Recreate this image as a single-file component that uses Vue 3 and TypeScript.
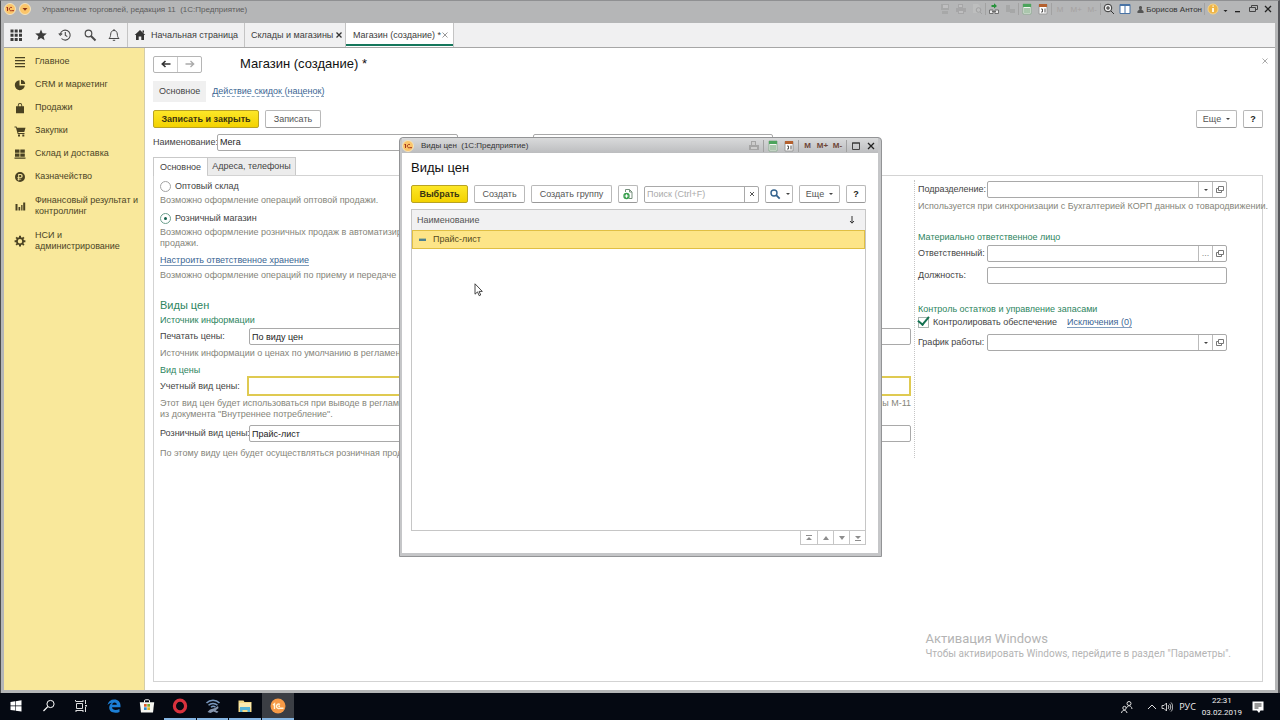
<script setup lang="ts">
import { ref } from 'vue'

interface Section { title: string; icon: string; even?: boolean }

const sections: Section[] = [
  { title: 'Главное', icon: 'M1 1h10v1.3H1zM1 4h10v1.3H1zM1 7h10v1.3H1zM1 10h10v1.3H1z' },
  { title: 'CRM и маркетинг', icon: 'M5.5 1.2v5.3h5.3A5 5 0 1 1 5.500 1.200zM7 .8a4.600 4.600 0 0 1 4.200 4.200H7zM7.500 7h3.300l-1.200 2.600z' },
  { title: 'Продажи', icon: 'M2 4.300h1.800V3.200a2.200 2.200 0 0 1 4.400 0v1.100H10V11.300H2zM4.700 4.300h2.600V3.200a1.300 1.300 0 0 0-2.600 0z', even: true },
  { title: 'Закупки', icon: 'M.5 1.500h2l.5 1.300h8.500L10.300 7H4.200l.3 1h6v1H3.700L1.900 2.500H.5zM4 9.500h2v2H4zM8.300 9.500h2v2h-2z' },
  { title: 'Склад и доставка', icon: 'M1 1.500h4.500v3.300H1zM6.300 1.500h4.500v3.300H6.300zM1 5.500h4.500v3.300H1zM6.300 5.500h4.500v3.300H6.300zM.5 9.600h11v1.200H.5z' },
  { title: 'Казначейство', icon: 'M6 1a5 5 0 1 1 0 10A5 5 0 0 1 6 1zM4.200 3v3.200h-.8v.8h.8v.7h-.8v.7h.8v1h1v-1h2v-.7h-2V7h1.500a2 2 0 0 0 0-4zM5.200 3.900h1.400a1.200 1.200 0 0 1 0 2.300H5.200z', even: true },
  { title: 'Финансовый результат и контроллинг', icon: 'M1.500 4h2v6.500h-2zM4.500 7h1.700v3.500H4.500zM7.200 5h1.300v5.500H7.200zM9.200 2.500h2v8h-2z' },
  { title: 'НСИ и администрирование', icon: 'M5 .8h2v1.500l1.100.5 1.100-1.100 1.300 1.300-1.100 1.100.5 1.100h1.500v2H9.900l-.5 1.100 1.100 1.100-1.300 1.300-1.100-1.100-1.100.5v1.500H5V10l-1.100-.5-1.100 1.100-1.300-1.300 1.100-1.100L2.100 7.200H.6v-2h1.500l.5-1.100L1.500 3l1.300-1.300 1.100 1.100L5 2.300zM6 4a2.200 2.200 0 1 0 0 4.400A2.200 2.200 0 0 0 6 4z', even: true }
]

const kind = ref('retail')
const name = ref('Мега')
const printPrices = ref('По виду цен')
const accountPrice = ref('')
const retailPrice = ref('Прайс-лист')
const department = ref('')
const responsible = ref('')
const position = ref('')
const schedule = ref('')
const controlSupply = ref(true)
const search = ref('')
const prices = ['Прайс-лист']
const pagers = [
  { label: 'В начало', d: 'M2 2h6v1H2zM5 4l3 3H2z' },
  { label: 'Вверх', d: 'M5 3l3 4H2z' },
  { label: 'Вниз', d: 'M5 7L2 3h6z' },
  { label: 'В конец', d: 'M5 6L2 3h6zM2 7h6v1H2z' }
]
</script>

<template>
  <div class="desktop">
    <div class="app-window">
      <header class="titlebar">
        <svg class="coin" viewBox="0 0 12 12"><circle cx="6" cy="6" r="5.500" fill="#fbc56a" stroke="#f2e3c0" /><path d="M2.500 5l1-1v4M8 4.700A1.700 1.700 0 1 0 7.500 7.700H10" fill="none" stroke="#a3321c" /></svg>
        <svg class="coin" viewBox="0 0 12 12"><circle cx="6" cy="6" r="5.500" fill="#fbc56a" stroke="#f2e3c0" /><path d="M3.500 5h5L6 7.800z" fill="#8a3414" /></svg>
        <span class="app-title">Управление торговлей, редакция 11&nbsp; (1С:Предприятие)</span>
        <div class="sys-tools">
          <svg class="ico faint" viewBox="0 0 12 12"><path d="M2 1h8v6H2zM3 8h6v3H3z" fill="#9b9b9b" /><path d="M4 2h5v3H4z" fill="#c9c9c9" /></svg>
          <svg class="ico faint" viewBox="0 0 12 12"><path d="M3 1h5v4H3zM1 5h10v4H1zM3 8h6v3H3z" fill="#989898" /><path d="M4 2h3v2H4zM4 8h4v2H4z" fill="#c9c9c9" /></svg>
          <svg class="ico faint" viewBox="0 0 12 12"><path d="M2 1h5l2 2v7H2z" fill="#c6c6c6" /><circle cx="7.500" cy="7" r="2.300" fill="none" stroke="#8d8d8d" /><path d="M9 9l2 2" stroke="#8d8d8d" /></svg>
          <i class="sep"></i>
          <svg class="ico" viewBox="0 0 12 12"><path d="M3.500 2H6V.3L9 2.900 6 5.500V4H3.500z" fill="#27923b" /><path d="M1.500 7h3.500v3.500H1.500zM7 7h3.500v3.500H7zM4 8.500h4" fill="#ededed" stroke="#666" stroke-width=".9" /></svg>
          <svg class="ico faint" viewBox="0 0 12 12"><path d="M2 2h4v7H2zM6 6h5v4H6z" fill="#999" /></svg>
          <i class="sep"></i>
          <svg class="ico" viewBox="0 0 12 12"><path d="M2 1h8v10H2z" fill="#f5f7f3" stroke="#8fae93" /><path d="M2 1h8v3H2z" fill="#4ca45c" /><path d="M4 5v5M6 5v5M8 5v5" stroke="#619667" /></svg>
          <svg class="ico" viewBox="0 0 12 12"><path d="M2 1.500h8V11H2z" fill="#fff" stroke="#999" /><path d="M2 1h8v3H2z" fill="#b4602e" /><path d="M4 6h1.500v3H4M8 5.500V9.500" fill="none" stroke="#555" /></svg>
          <i class="sep"></i>
          <span class="mem off">M</span><span class="mem off">M+</span><span class="mem off">M-</span>
          <i class="sep"></i>
          <svg class="ico" viewBox="0 0 12 12"><circle cx="5" cy="5" r="3.800" fill="#eee" stroke="#333" /><path d="M3 5h4M5 3v4M8 8l3 3" stroke="#333" /></svg>
          <svg class="ico" viewBox="0 0 12 12"><path d="M1 1.500h10v9H1z" fill="#fff" stroke="#4973a5" /><path d="M1 1h10v2H1zM5.500 2h1v8h-1z" fill="#4973a5" /></svg>
          <span class="user"><svg viewBox="0 0 8 8"><path d="M4 0a2 2 0 0 1 1 3.600L7.500 6v2h-7V6L3 3.600A2 2 0 0 1 4 0z" fill="#555" /></svg>Борисов Антон</span>
          <i class="sep"></i>
          <svg class="ico" viewBox="0 0 12 12"><circle cx="6" cy="6" r="5" fill="#eeb548" stroke="#f4d48c" /><path d="M5.400 2.500h1.500v1.300H5.400zM5 5h2v4H5z" fill="#fff8df" /></svg>
          <svg class="drop" viewBox="0 0 6 12"><path d="M1 7h4L3 9z" fill="#222" /></svg>
          <button class="win-btn" aria-label="Свернуть"><svg viewBox="0 0 10 10"><path d="M2 7h5v1.300H2z" fill="#222" /></svg></button>
          <button class="win-btn" aria-label="Восстановить"><svg viewBox="0 0 10 10"><path d="M3.500 3.500v-2h6v4h-2M1.500 3.500h6v4h-6z" fill="none" stroke="#444" /></svg></button>
          <button class="win-btn" aria-label="Закрыть"><svg viewBox="0 0 10 10"><path d="M2 2l6 6M8 2L2 8" stroke="#222" stroke-width="1.300" /></svg></button>
        </div>
      </header>

      <nav class="tabbar">
        <div class="quick">
          <button aria-label="Меню"><svg viewBox="0 0 14 14"><path d="M1.500 1.500h3v3h-3zM5.700 1.500h3v3h-3zM10 1.500h3v3h-3zM1.500 5.700h3v3h-3zM5.700 5.700h3v3h-3zM10 5.700h3v3h-3zM1.500 10h3v3h-3zM5.700 10h3v3h-3zM10 10h3v3h-3z" fill="#3b3b3b" /></svg></button>
          <button aria-label="Избранное"><svg viewBox="0 0 14 14"><path d="M7 1.500l1.600 3.800 4.200.3-3.200 2.700 1 4L7 10.100l-3.600 2.200 1-4L1.200 5.600l4.200-.3z" fill="#3b3b3b" /></svg></button>
          <button aria-label="История"><svg viewBox="0 0 14 14"><path d="M2.300 6A5 5 0 1 1 3.500 10.500M.8 5.300l1.500 2 1.900-1.800M7.300 4v3.300l2 1.300" fill="none" stroke="#4a4a4a" stroke-width="1.100" /></svg></button>
          <button aria-label="Поиск"><svg viewBox="0 0 14 14"><circle cx="5.500" cy="5.500" r="3.300" fill="none" stroke="#4a4a4a" stroke-width="1.200" /><path d="M8 8l4.500 4.500" stroke="#4a4a4a" stroke-width="2" /></svg></button>
          <button aria-label="Уведомления"><svg viewBox="0 0 14 14"><path d="M2 10.500c1.500-1.500 1.500-2.500 1.700-4.500C4 3.700 5 2.500 7 2.500S10 3.700 10.300 6c.2 2 .2 3 1.700 4.500zM5.800 12.300h2.400M7 1v1.500" fill="none" stroke="#4a4a4a" /></svg></button>
        </div>
        <a class="tab home" href="#home"><svg viewBox="0 0 12 12"><path d="M6 1l5.300 5H10v5H7.300V7.500H4.700V11H2V6H.7zM8.500 1.500H10v2.500l-1.500-1z" fill="#333" /></svg>Начальная страница</a>
        <a class="tab stores" href="#stores">Склады и магазины<svg class="x" viewBox="0 0 8 8"><path d="M1.500 1.500l5 5M6.500 1.500l-5 5" stroke="#333" stroke-width="1.300" /></svg></a>
        <a class="tab active" href="#store">Магазин (создание) *<svg class="x" viewBox="0 0 8 8"><path d="M1.500 1.500l5 5M6.500 1.500l-5 5" stroke="#999" /></svg></a>
      </nav>

      <div class="body">
        <aside class="sidebar">
          <a v-for="s in sections" :key="s.title" class="section" href="#section">
            <svg viewBox="0 0 12 12"><path :d="s.icon" :fill-rule="s.even ? 'evenodd' : 'nonzero'" fill="#4a4222" /></svg>
            <span>{{ s.title }}</span>
          </a>
        </aside>

        <main class="page">
          <div class="head">
            <div class="history">
              <button aria-label="Назад"><svg viewBox="0 0 12 10"><path d="M10.500 5H2.500M5.500 2L2.300 5l3.200 3" fill="none" stroke="#333" stroke-width="1.600" /></svg></button>
              <button aria-label="Вперед"><svg viewBox="0 0 12 10"><path d="M1.500 5h8M6.500 2l3.200 3-3.200 3" fill="none" stroke="#aaa" stroke-width="1.300" /></svg></button>
            </div>
            <h1>Магазин (создание) *</h1>
            <button class="page-close" aria-label="Закрыть форму"><svg viewBox="0 0 8 8"><path d="M1.500 1.500l5 5M6.500 1.500l-5 5" stroke="#aaa" /></svg></button>
          </div>
          <div class="subnav">
            <span class="current">Основное</span>
            <a href="#discounts">Действие скидок (наценок)</a>
          </div>
          <div class="commands">
            <button class="btn primary save">Записать и закрыть</button>
            <button class="btn write">Записать</button>
            <span class="grow"></span>
            <button class="btn more">Еще <i class="caret"></i></button>
            <button class="btn help-btn">?</button>
          </div>
          <div class="name-row">
            <label for="name">Наименование:</label>
            <input id="name" v-model="name" class="name-input">
            <input class="group-input" aria-label="Группа">
          </div>
          <div class="page-tabs">
            <button class="page-tab on">Основное</button>
            <button class="page-tab">Адреса, телефоны</button>
          </div>
          <div class="panel">
            <section class="left">
              <label class="radio first"><input v-model="kind" type="radio" value="wholesale">Оптовый склад</label>
              <p class="hint">Возможно оформление операций оптовой продажи.</p>
              <label class="radio"><input v-model="kind" type="radio" value="retail">Розничный магазин</label>
              <p class="hint">Возможно оформление розничных продаж в автоматизированной<br>продажи.</p>
              <p class="link-line"><a href="#storage">Настроить ответственное хранение</a></p>
              <p class="hint after-link">Возможно оформление операций по приему и передаче на хранение.</p>
              <h2>Виды цен</h2>
              <h3 class="tight">Источник информации</h3>
              <div class="field"><label for="print">Печатать цены:</label><input id="print" v-model="printPrices"></div>
              <p class="hint after-field">Источник информации о ценах по умолчанию в регламентированных формах.</p>
              <h3 class="kind-head">Вид цены</h3>
              <div class="field focused"><label for="account">Учетный вид цены:</label><input id="account" v-model="accountPrice"></div>
              <div class="hint split"><span>Этот вид цен будет использоваться при выводе в регламентированные<br>из документа "Внутреннее потребление".</span><span>формы М-11</span></div>
              <div class="field retail"><label for="retail">Розничный вид цены:</label><input id="retail" v-model="retailPrice"></div>
              <p class="hint last">По этому виду цен будет осуществляться розничная продажа.</p>
            </section>
            <section class="right">
              <div class="rfield dep">
                <label for="dep">Подразделение:</label>
                <div class="combo"><input id="dep" v-model="department"><button aria-label="Выбрать подразделение"><i class="caret"></i></button><button aria-label="Открыть подразделение"><svg viewBox="0 0 10 10"><path d="M3.500 1.500h5v4h-5zM3.500 3.500h-2v4h5v-2" fill="none" stroke="#777" /></svg></button></div>
              </div>
              <p class="hint after-field">Используется при синхронизации с Бухгалтерией КОРП данных о товародвижении.</p>
              <h3 class="spaced">Материально ответственное лицо</h3>
              <div class="rfield resp">
                <label for="resp">Ответственный:</label>
                <div class="combo"><input id="resp" v-model="responsible"><button class="dots" aria-label="Выбрать ответственного">...</button><button aria-label="Открыть ответственного"><svg viewBox="0 0 10 10"><path d="M3.500 1.500h5v4h-5zM3.500 3.500h-2v4h5v-2" fill="none" stroke="#777" /></svg></button></div>
              </div>
              <div class="rfield pos">
                <label for="pos">Должность:</label>
                <div class="combo"><input id="pos" v-model="position"></div>
              </div>
              <h3 class="spaced">Контроль остатков и управление запасами</h3>
              <div class="check-row">
                <label><input v-model="controlSupply" type="checkbox">Контролировать обеспечение</label>
                <a href="#exceptions">Исключения (0)</a>
              </div>
              <div class="rfield dep">
                <label for="sched">График работы:</label>
                <div class="combo"><input id="sched" v-model="schedule"><button aria-label="Выбрать график"><i class="caret"></i></button><button aria-label="Открыть график"><svg viewBox="0 0 10 10"><path d="M3.500 1.500h5v4h-5zM3.500 3.500h-2v4h5v-2" fill="none" stroke="#777" /></svg></button></div>
              </div>
            </section>
          </div>
        </main>
      </div>
    </div>

    <div class="dialog" role="dialog" aria-labelledby="dlg-title">
      <div class="dlg-bar">
        <svg class="coin" viewBox="0 0 12 12"><circle cx="6" cy="6" r="5.500" fill="#fbc56a" stroke="#f2e3c0" /><path d="M2.500 5l1-1v4M8 4.700A1.700 1.700 0 1 0 7.500 7.700H10" fill="none" stroke="#a3321c" /></svg>
        <span class="dlg-caption">Виды цен&nbsp; (1С:Предприятие)</span>
        <svg class="ico" viewBox="0 0 12 12"><path d="M3 1h5v4H3zM1 5h10v5H1z" fill="#a5a5a5" /><path d="M4 2h3v3H4zM3 7h6v2H3z" fill="#ccc" /></svg>
        <i class="sep"></i>
        <svg class="ico" viewBox="0 0 12 12"><path d="M2 1h8v10H2z" fill="#f5f7f3" stroke="#8fae93" /><path d="M2 1h8v3H2z" fill="#4ca45c" /><path d="M4 5v5M6 5v5M8 5v5" stroke="#619667" /></svg>
        <svg class="ico" viewBox="0 0 12 12"><path d="M2 1.500h8V11H2z" fill="#fff" stroke="#999" /><path d="M2 1h8v3H2z" fill="#b4602e" /><path d="M4 6h1.500v3H4M8 5.500V9.500" fill="none" stroke="#555" /></svg>
        <i class="sep"></i>
        <span class="mem">M</span><span class="mem">M+</span><span class="mem">M-</span>
        <i class="sep"></i>
        <button class="win-btn" aria-label="Развернуть"><svg viewBox="0 0 10 10"><path d="M1.500 2h7v6.500h-7z" fill="none" stroke="#444" /><path d="M1 1.500h8v1H1z" fill="#333" /></svg></button>
        <button class="win-btn" aria-label="Закрыть окно"><svg viewBox="0 0 10 10"><path d="M2 2l6 6M8 2L2 8" stroke="#222" stroke-width="1.300" /></svg></button>
      </div>
      <div class="dlg-body">
        <h2 id="dlg-title" class="dlg-title">Виды цен</h2>
        <div class="dlg-tools">
          <button class="btn primary pick">Выбрать</button>
          <button class="btn create">Создать</button>
          <button class="btn create-group">Создать группу</button>
          <button class="btn icon-btn" aria-label="Создать копированием"><svg viewBox="0 0 12 12"><path d="M3.500 4V1.500h4l2.500 2.500v6.500H7M7.500 1.500V4H10" fill="none" stroke="#76907c" /><circle cx="4.500" cy="8" r="3.200" fill="#3aa04e" /><path d="M4.500 6.200v3.600M2.700 8h3.600" stroke="#fff" stroke-width="1.200" /></svg></button>
          <div class="search"><input v-model="search" placeholder="Поиск (Ctrl+F)" aria-label="Поиск"><button aria-label="Очистить"><svg viewBox="0 0 8 8"><path d="M2 2l4 4M6 2L2 6" stroke="#555" /></svg></button></div>
          <button class="btn find" aria-label="Найти"><svg viewBox="0 0 12 12"><circle cx="5" cy="5" r="3" fill="none" stroke="#33628d" stroke-width="1.400" /><path d="M7.200 7.200l3.500 3.500" stroke="#33628d" stroke-width="1.800" /></svg><i class="caret"></i></button>
          <button class="btn more">Еще <i class="caret"></i></button>
          <button class="btn help-btn">?</button>
        </div>
        <div class="grid">
          <table>
            <thead><tr><th><div class="th">Наименование<svg viewBox="0 0 8 10"><path d="M4 1v7M2 6l2 2.200L6 6" fill="none" stroke="#333" /></svg></div></th></tr></thead>
            <tbody><tr v-for="p in prices" :key="p"><td><div class="td"><i class="dash"></i>{{ p }}</div></td></tr></tbody>
          </table>
        </div>
        <div class="pager">
          <button v-for="p in pagers" :key="p.label" :aria-label="p.label"><svg viewBox="0 0 10 10"><path :d="p.d" fill="#8d8d8d" /></svg></button>
        </div>
      </div>
    </div>

    <svg class="cursor" viewBox="0 0 9 14"><path d="M1 .8v10.400l2.500-2.300 1.700 3.800 1.500-.7L5.100 8.400h3.200z" fill="#fff" stroke="#333" stroke-width=".9" /></svg>

    <div class="activation">
      <p class="act-title">Активация Windows</p>
      <p class="act-text">Чтобы активировать Windows, перейдите в раздел "Параметры".</p>
    </div>

    <footer class="taskbar">
      <div class="tasks">
        <button class="task" aria-label="Пуск"><svg viewBox="0 0 16 16"><path d="M2.500 4l4.500-.7v4.300H2.500zM7.600 3.200L13.500 2.300v5.300H7.600zM2.500 8.300H7v4.300L2.500 12zM7.600 8.300h5.900v5.300l-5.900-.9z" fill="#fff" /></svg></button>
        <button class="task" aria-label="Поиск"><svg viewBox="0 0 16 16"><circle cx="9.500" cy="6" r="3.600" fill="none" stroke="#fff" /><path d="M6.800 8.700L2.500 13" stroke="#fff" stroke-width="1.200" /></svg></button>
        <button class="task" aria-label="Представление задач"><svg viewBox="0 0 16 16"><path d="M3.500 5.500h6v5h-6zM2.500 3.500V2M10 3.500H3M10 12.500H3M12.500 2v4M12.500 9v5M10 2v2M10 12v2M3 12v2" fill="none" stroke="#ddd" /><path d="M12 7h2v1.500h-2z" fill="#ddd" /></svg></button>
        <button class="task" aria-label="Edge"><svg viewBox="0 0 16 16"><path d="M1.500 7C2.200 3.500 4.700 1.500 8.200 1.500c4 0 6.300 2.700 6.300 6.300v1.400H6c.2 3 4.300 3.500 7.500 1.700v3c-4.800 2-10.300.6-10.300-4.300 0-2.300 1.200-4 3-4.900C4 5 2.500 5.700 1.500 7zM6.200 6.800h4.600C10.800 3.800 6.500 3.800 6.200 6.800z" fill="#1c7fd6" fill-rule="evenodd" /></svg></button>
        <button class="task" aria-label="Магазин приложений"><svg viewBox="0 0 16 16"><path d="M5.500 4.500V2.800a1 1 0 0 1 1-1h3a1 1 0 0 1 1 1v1.700" fill="none" stroke="#fff" /><path d="M.8 4.300h14.400L14 14.500H2z" fill="#f7f7f2" /><path d="M5 6h2.700v2.700H5z" fill="#dd5b2c" /><path d="M8.300 6H11v2.700H8.300z" fill="#78a82c" /><path d="M5 9.300h2.700V12H5z" fill="#2a8bd0" /><path d="M8.300 9.300H11V12H8.300z" fill="#e6b022" /></svg></button>
        <button class="task open" aria-label="Opera"><svg viewBox="0 0 16 16"><ellipse cx="8" cy="8" rx="5.600" ry="5.900" fill="none" stroke="#d8323d" stroke-width="3.200" /></svg></button>
        <button class="task open" aria-label="Сеть"><svg viewBox="0 0 16 16"><path d="M1.500 5C5 1.300 11 1.300 14.500 5M3.500 7.300c2.500-2.500 6.500-2.500 9 0M6 9.300c1.500-1.300 3-1.300 4.500 0" fill="none" stroke="#7897bd" stroke-width="1.500" /><path d="M2.500 14l2.500-2.500 5-1.500 3-2 .5 2-3 2.500 3 1-1.500 1.500-3.500-1.500-3 1.500z" fill="#8595ad" /></svg></button>
        <button class="task open" aria-label="Проводник"><svg viewBox="0 0 16 16"><path d="M1.500 2.500h5l1 1.500h7V14h-13z" fill="#f3d987" /><path d="M2 5h12v5H2z" fill="#fbeab1" /><path d="M3 9h10v5h-2.500v-2h-5v2H3z" fill="#55b4d8" /></svg></button>
        <button class="task open current" aria-label="1С:Предприятие"><svg viewBox="0 0 16 16"><circle cx="8" cy="8" r="7.500" fill="#f79a46" /><path d="M3 7l1.500-1.300V11M10 6.500a2.200 2.200 0 1 0-.5 3.800H13.500M10 8.300H8.300" fill="none" stroke="#fff3d8" stroke-width="1.400" /></svg></button>
      </div>
      <div class="tray">
        <svg class="people" viewBox="0 0 14 14"><circle cx="9" cy="3.500" r="2" fill="none" stroke="#ddd" /><path d="M6.500 8c1-3 5-3 5.500 1M1.500 13c.3-3.500 5-3.500 5.500 0" fill="none" stroke="#ddd" /><circle cx="4.500" cy="8" r="1.700" fill="none" stroke="#ddd" /></svg>
        <svg viewBox="0 0 12 12"><path d="M2 8l4-4 4 4" fill="none" stroke="#ddd" /></svg>
        <svg viewBox="0 0 12 12"><path d="M1 4.500h2L5.500 2v8L3 7.500H1zM7 4c1 1 1 3 0 4M8.500 2.800c1.700 1.700 1.700 4.700 0 6.400M10 1.500c2.300 2.500 2.300 6.500 0 9" fill="none" stroke="#ddd" stroke-width=".9" /></svg>
        <span class="lang">РУС</span>
        <div class="clock"><span>22:31</span><span>03.02.2019</span></div>
        <svg class="note" viewBox="0 0 14 14"><path d="M1.500 1.500h11v9H9.500L8 13 6 10.500H1.500z" fill="#fff" /><path d="M3.500 4h7M3.500 6h7M3.500 8h4" stroke="#333" /></svg>
      </div>
    </footer>
  </div>
</template>

<style>
body { margin: 0; overflow: hidden; }
</style>

<style scoped>
* { box-sizing: border-box; }
.desktop {
  position: relative; display: flex; flex-direction: column; height: 100vh;
  font: 9px/11px "Liberation Sans", Arial, sans-serif; color: #444; background: #fff;
}
button { font: inherit; color: inherit; padding: 0; margin: 0; border: 0; background: none; display: flex; align-items: center; justify-content: center; }
input { font: inherit; color: #222; margin: 0; min-width: 0; outline: none; }
h1, h2, h3, p { margin: 0; font-weight: normal; }
svg { display: block; flex: none; }
a { color: #3a6593; text-decoration: none; }

.app-window {
  flex: 1; min-height: 0; display: flex; flex-direction: column;
  background: #b5b6b7; border-left: 1px solid #4c4c4c; border-right: 2px solid #55565a; border-top: 1px solid #8f9092;
  padding: 0 3px;
}
.titlebar { height: 22px; padding: 0 0 6px; display: flex; align-items: center; background: #b5b6b7; }
.coin { width: 12px; height: 12px; }
.titlebar .coin + .coin { margin-left: 3px; }
.app-title { margin-left: 11px; font-size: 8px; color: #5d5d5d; white-space: nowrap; }
.sys-tools { margin-left: auto; display: flex; align-items: center; }
.ico { width: 16px; height: 12px; }
.faint { opacity: .5; }
.sep { width: 1px; height: 12px; background: #a2a2a2; }
.mem { width: 16px; text-align: center; font-size: 8px; font-weight: bold; color: #6e4638; }
.mem.off { color: #a5a2a1; font-weight: normal; }
.user { display: flex; align-items: center; gap: 2px; margin: 0 2px 0 4px; font-size: 8px; color: #333; white-space: nowrap; }
.user svg { width: 7px; height: 7px; }
.drop { width: 9px; height: 12px; }
.win-btn { width: 15px; }
.win-btn svg { width: 10px; height: 10px; }

.tabbar { height: 25px; display: flex; background: #f0f0f1; border-bottom: 1px solid #a6a6a6; }
.quick { width: 124px; display: flex; align-items: center; justify-content: space-between; padding: 0 6px 0 5px; border-right: 1px solid #c4c4c4; }
.quick svg { width: 14px; height: 14px; }
.tab { display: flex; align-items: center; border-right: 1px solid #c4c4c4; color: #3c3c3c; padding: 0 2px 0 6px; white-space: nowrap; justify-content: space-between; }
.tab svg { width: 12px; height: 12px; }
.tab .x { width: 8px; height: 8px; }
.home { width: 117px; justify-content: flex-start; gap: 5px; }
.stores { width: 101px; }
.active { width: 108px; background: #fff; padding: 0 4px 0 7px; box-shadow: inset 0 -1px #fff, inset 0 -3px #15775c, inset 2px 0 #fff, inset -2px 0 #fff; }

.body { flex: 1; min-height: 0; display: flex; background: #fff; margin-bottom: 3px; }
.sidebar { width: 141px; background: #f9e89b; border-right: 1px solid #d4cda8; padding-top: 2px; flex: none; }
.section { display: flex; align-items: center; min-height: 23px; color: #4c4526; }
.section svg { width: 12px; height: 12px; margin: 0 9px 0 10px; }
.section span { width: 104px; }
.section:nth-child(n+7) { min-height: 35px; }

.page { flex: 1; min-width: 0; display: flex; flex-direction: column; padding: 7px 12px 8px 8px; }
.head { display: flex; align-items: center; height: 18px; }
.history { display: flex; border: 1px solid #b5b5b5; border-radius: 2px; height: 17px; width: 49px; }
.history button { flex: 1; }
.history button + button { border-left: 1px solid #ccc; }
.history svg { width: 12px; height: 10px; }
h1 { font-size: 13px; line-height: 16px; color: #111; margin-left: 38px; flex: 1; }
.page-close { width: 8px; height: 14px; align-items: flex-start; margin-right: -6px; }
.page-close svg { width: 8px; height: 8px; }
.subnav { display: flex; align-items: center; margin-top: 8px; height: 21px; }
.subnav .current { background: #f0f0f0; padding: 5px 6px; margin-right: 6px; }
.subnav a { border-bottom: 1px dashed #89a3bf; line-height: 10px; }
.commands { display: flex; margin-top: 8px; gap: 6px; }
.grow { flex: 1; }
.btn { height: 18px; background: #fff; border: 1px solid #b9b9b9; border-bottom-color: #999; border-radius: 2px; color: #555; white-space: nowrap; }
.primary { background: linear-gradient(#fde728, #f3d200); border-color: #b9a323; color: #3b3510; font-weight: bold; }
.save { width: 106px; }
.write { width: 56px; }
.more { width: 41px; gap: 5px; }
.help-btn { width: 20px; color: #222; font-weight: bold; }
.caret { width: 0; height: 0; border: 2px solid transparent; border-top-color: #444; border-bottom: 0; }
.name-row { display: flex; align-items: center; margin-top: 5px; height: 18px; }
.name-row label { width: 64px; white-space: nowrap; }
.name-input { width: 241px; height: 17px; border: 1px solid #a9a9a9; border-radius: 2px; padding: 0 2px; }
.group-input { width: 240px; height: 17px; border: 1px solid #a9a9a9; border-radius: 2px; margin-left: 75px; }
.page-tabs { display: flex; margin-top: 6px; height: 18px; padding: 0; }
.page-tab { border: 1px solid #c9c9c9; background: #ececec; height: 18px; width: 89px; border-bottom: 0; }
.page-tab.on { background: #fff; width: 54px; height: 19px; border-right: 0; position: relative; }
.panel { flex: 1; min-height: 0; border: 1px solid #d3d3d3; display: flex; align-items: flex-start; }
.left { flex: 1; min-width: 0; padding-left: 6px; padding-right: 3px; }
.right { width: 348px; flex: none; margin-top: 4px; padding-left: 3px; height: 278px; border-left: 1px dotted #c5c5c5; }
.hint { color: #85857a; margin-top: 2px; white-space: nowrap; }
.radio { display: flex; align-items: center; height: 14px; margin-top: 5px; width: max-content; }
.radio.first { margin-top: 3px; }
.radio input { appearance: none; width: 11px; height: 11px; border: 1px solid #a3a3a3; border-radius: 50%; margin-right: 4px; background: #fff; display: grid; place-items: center; }
.radio input:checked { border-color: #6c9f8d; }
.radio input:checked::before { content: ""; width: 3px; height: 3px; border-radius: 50%; background: #12604c; }
.link-line { margin-top: 6px; height: 12px; }
.link-line a { border-bottom: 1px solid #7f9dbd; }
.after-link, .after-field { margin-top: 3px; }
.panel h2 { font-size: 11px; line-height: 14px; color: #2d8560; margin-top: 17px; }
h3 { font-size: 9px; line-height: 12px; color: #2d8560; }
.tight { margin-top: 2px; }
.kind-head { margin-top: 5px; }
.spaced { margin-top: 19px; }
.field { display: flex; align-items: center; margin-top: 2px; height: 17px; white-space: nowrap; }
.field label { width: 89px; }
.field input { flex: 1; height: 17px; border: 1px solid #a9a9a9; border-radius: 2px; padding: 0 2px; }
.focused { height: 20px; margin-top: 0; }
.focused label { width: 87px; }
.focused input { height: 20px; border: 2px solid #dfca51; border-radius: 0; }
.split { display: flex; justify-content: space-between; }
.retail { margin-top: 5px; }
.last { margin-top: 6px; }
.rfield { display: flex; align-items: center; height: 17px; }
.rfield label { width: 69px; white-space: nowrap; }
.dep, .pos { margin-top: 5px; }
.right .dep:first-child { margin-top: 1px; }
.resp { margin-top: 2px; }
.combo { width: 240px; height: 17px; display: flex; border: 1px solid #a9a9a9; border-radius: 2px; }
.combo input { flex: 1; border: 0; background: none; }
.combo button { width: 14px; border-left: 1px solid #bbb; }
.combo svg { width: 10px; height: 10px; }
.dots { color: #888; }
.check-row { display: flex; align-items: center; height: 13px; margin-top: 1px; gap: 10px; }
.check-row label { display: flex; align-items: center; white-space: nowrap; }
.check-row input { appearance: none; width: 11px; height: 11px; border: 1px solid #a9b5af; margin-right: 4px; display: flex; justify-content: center; align-items: flex-end; }
.check-row input:checked::before { content: ""; flex: none; width: 5px; height: 9px; border: solid #137251; border-width: 0 2px 2px 0; transform: rotate(40deg); margin-bottom: 2px; }
.check-row a { border-bottom: 1px solid #7f9dbd; line-height: 10px; }

.dialog { position: absolute; left: 399px; top: 137px; width: 483px; height: 420px; display: flex; flex-direction: column; background: #c5c6c8; border: 1px solid #939496; border-radius: 4px 4px 0 0; padding: 0 3px 3px 2px; }
.dlg-bar { height: 15px; display: flex; align-items: center; background: linear-gradient(#d9dadb, #bcbdbf); flex: none; }
.dlg-bar .sep { margin: 0 1px; }
.dlg-bar .mem { width: 15px; }
.dlg-caption { flex: 1; margin-left: 7px; font-size: 8px; color: #333; white-space: nowrap; }
.dlg-body { flex: 1; min-height: 0; background: #fff; display: flex; flex-direction: column; padding: 7px 12px 8px 9px; }
.dlg-title { font-size: 13px; line-height: 16px; color: #111; }
.dlg-tools { display: flex; align-items: center; margin-top: 9px; gap: 6px; }
.pick { width: 57px; }
.create { width: 51px; }
.create-group { width: 81px; }
.icon-btn { width: 20px; }
.btn svg { width: 12px; height: 12px; }
.search { flex: 1; min-width: 0; height: 17px; display: flex; border: 1px solid #a9a9a9; border-radius: 2px; }
.search input { flex: 1; border: 0; background: none; padding: 0 2px; }
.search input::placeholder { color: #aaa; opacity: 1; }
.search button { width: 14px; border-left: 1px solid #a9a9a9; }
.search svg { width: 8px; height: 8px; }
.find { width: 28px; gap: 5px; }
.grid { flex: 1; min-height: 0; margin-top: 6px; border: 1px solid #c6c6c6; }
table { width: 100%; border-collapse: collapse; }
th, td { padding: 0; font-weight: normal; text-align: left; }
.th { height: 20px; display: flex; align-items: center; justify-content: space-between; background: #f1f1f2; padding: 0 9px 0 5px; color: #555; }
.th svg { width: 8px; height: 10px; }
.td { height: 19px; display: flex; align-items: center; background: #fde588; border: 1px solid #e0bf43; padding-left: 6px; color: #554b20; }
.dash { width: 7px; height: 3px; background: #4f8290; border-top: 1px solid #b5c089; margin-right: 7px; }
.pager { display: flex; align-self: flex-end; border: 1px solid #c6c6c6; border-top: 0; height: 14px; }
.pager button { width: 16px; }
.pager button + button { border-left: 1px solid #c6c6c6; }
.pager svg { width: 10px; height: 10px; }

.cursor { position: absolute; left: 474px; top: 283px; width: 9px; height: 14px; }
.activation { position: absolute; right: 49px; bottom: 59px; font-family: Roboto, sans-serif; color: #b4b4b4; white-space: nowrap; }
.act-title { font-size: 13px; line-height: 16px; }
.act-text { font-size: 10px; line-height: 14px; }

.taskbar { height: 27px; flex: none; display: flex; background: #050912; font-family: "Open Sans", "Noto Sans", sans-serif; color: #eee; }
.tasks { width: 294px; display: flex; gap: 1px; }
.task { flex: 1; height: 27px; border-bottom: 2px solid transparent; }
.task svg { width: 16px; height: 16px; }
.task.open { border-bottom-color: #86b6e3; }
.task.current { background: #3b3e44; }
.tray { margin-left: auto; display: flex; align-items: center; gap: 6px; padding-right: 15px; }
.tray svg { width: 12px; height: 12px; }
.tray svg + svg { margin-left: -3px; }
.tray .people { width: 14px; height: 14px; margin-right: 9px; }
.clock { display: flex; flex-direction: column; align-items: center; font: 8px/12px Roboto, sans-serif; }
.tray .note { width: 14px; height: 14px; margin-left: 3px; }
</style>
